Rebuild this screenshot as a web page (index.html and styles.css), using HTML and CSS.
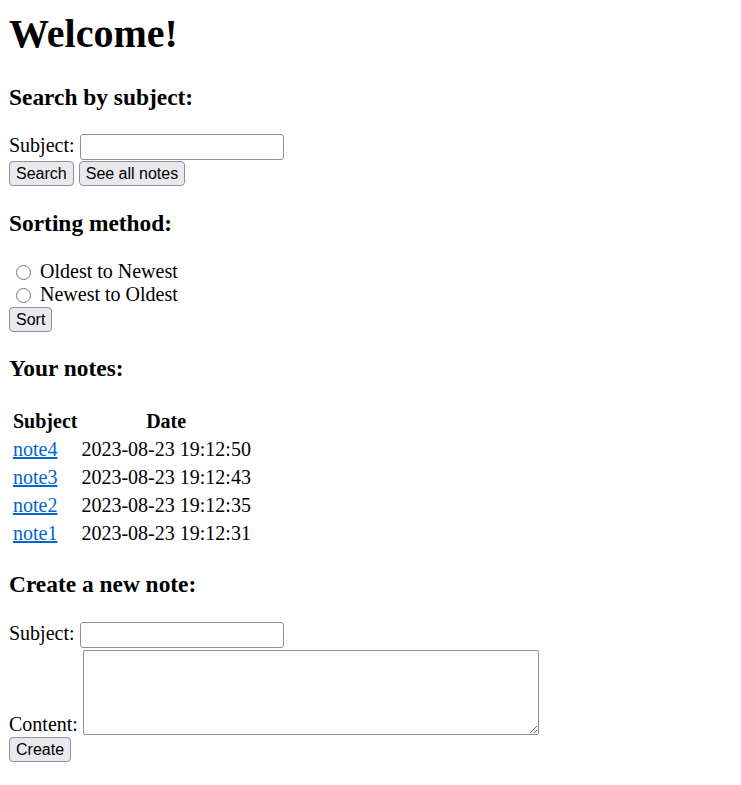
FILE: index.html
```html
<!DOCTYPE html>
<html>
<head>
<meta charset="utf-8">
<link rel="stylesheet" href="styles.css">
</head>
<body>
<h1 class="title">Welcome!</h1>
<h3 class="section">Search by subject:</h3>
<form class="form">
<label>Subject: </label><input type="text" class="text-input"><br>
<button type="button" class="btn">Search</button>
<button type="button" class="btn">See all notes</button>
</form>
<h3 class="section">Sorting method:</h3>
<form class="form">
<input type="radio" name="sort" class="radio"><label> Oldest to Newest</label><br>
<input type="radio" name="sort" class="radio"><label> Newest to Oldest</label><br>
<button type="button" class="btn">Sort</button>
</form>
<h3 class="section">Your notes:</h3>
<table class="notes">
<tr><th>Subject</th><th>Date</th></tr>
<tr><td><a href="#">note4</a></td><td>2023-08-23 19:12:50</td></tr>
<tr><td><a href="#">note3</a></td><td>2023-08-23 19:12:43</td></tr>
<tr><td><a href="#">note2</a></td><td>2023-08-23 19:12:35</td></tr>
<tr><td><a href="#">note1</a></td><td>2023-08-23 19:12:31</td></tr>
</table>
<h3 class="section">Create a new note:</h3>
<form class="form">
<label>Subject: </label><input type="text" class="text-input"><br>
<label>Content: </label><textarea class="content"></textarea><br>
<button type="button" class="btn">Create</button>
</form>
</body>
</html>
```
FILE: styles.css
```css
body {
  font-family: "Liberation Serif", "Times New Roman", serif;
  font-size: 20px;
  line-height: 23px;
  margin: 8px 8px 8px 9px;
  color: #000;
  background: #fff;
}
.title {
  font-size: 40px;
  line-height: 46px;
  margin: 3px 0 26.8px;
}
.section {
  font-size: 23.4px;
  line-height: 27px;
  margin: 23.4px 0;
}
.form {
  margin: 0;
}
.text-input {
  font-family: "Liberation Sans", Arial, sans-serif;
  font-size: 16px;
  width: 204px;
  height: 26px;
  box-sizing: border-box;
  border: 1px solid #8f8f9d;
  border-radius: 3px;
  padding: 1px 2px;
  margin: 0;
}
.btn {
  font-family: "Liberation Sans", Arial, sans-serif;
  font-size: 16px;
  line-height: 19px;
  height: 25px;
  background: #e9e9ed;
  border: 1px solid #8f8f9d;
  border-radius: 4px;
  padding: 2px 6px;
  margin: 1px 0 0;
  color: #000;
  box-sizing: border-box;
}
.radio {
  margin: 0 4px 0 7px;
  width: 15px;
  height: 15px;
  vertical-align: -2px;
}
.notes {
  border-spacing: 2px;
  margin-top: 1px;
  margin-left: 1px;
}
.notes th, .notes td {
  padding: 2px 1px 1px;
  text-align: left;
}
.notes th + th {
  text-align: center;
}
.notes a {
  color: #0066cc;
}
.content {
  width: 456px;
  height: 85px;
  box-sizing: border-box;
  border: 1px solid #8f8f9d;
  border-radius: 2px;
  margin: 2px 0 1px;
  vertical-align: bottom;
}
```
